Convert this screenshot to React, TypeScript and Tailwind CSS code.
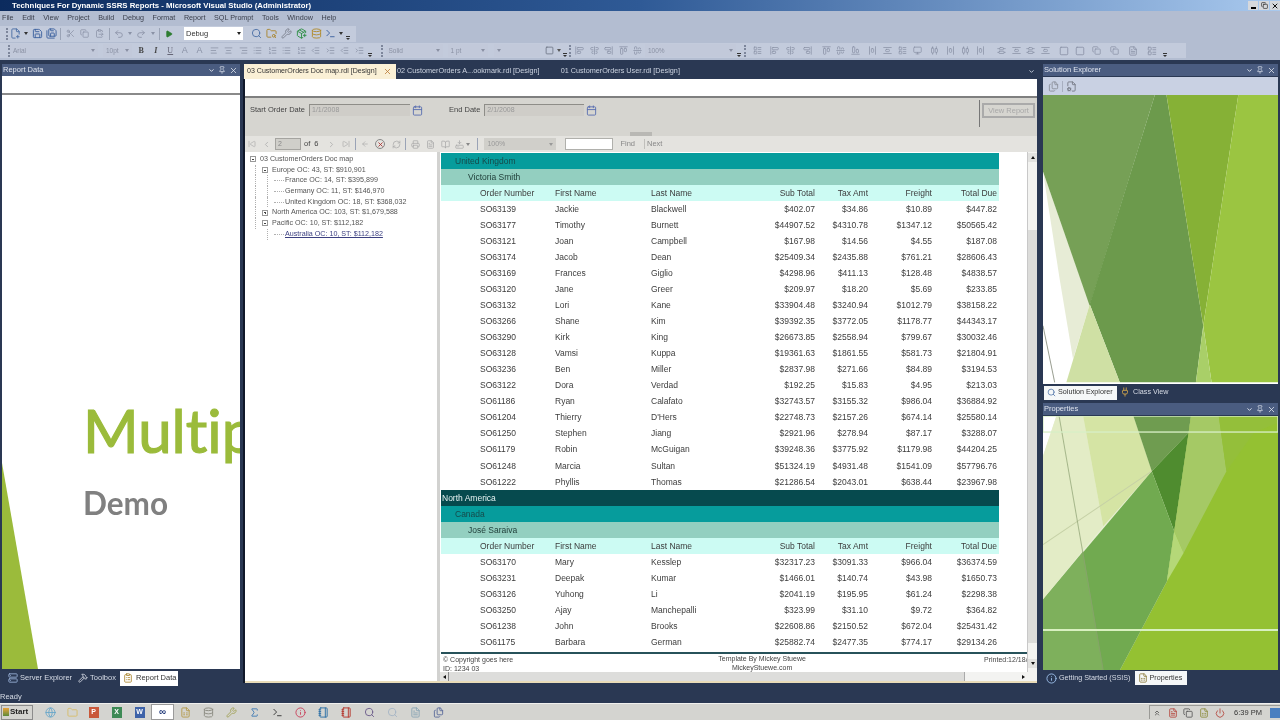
import React from 'react';
import {
  FilePlus2, Save, SaveAll, Scissors, Copy, ClipboardPaste, Undo2, Redo2, Play, Search, FolderSearch, Wrench, PackagePlus, Database, Terminal,
  ChevronDown, AlignLeft, AlignCenter, AlignRight, List, ListOrdered, Indent, Outdent, Square, Pin, X, Calendar, SkipBack, ChevronLeft, ChevronRight, SkipForward,
  ArrowLeft, RefreshCw, Printer, FileText, BookOpen, HardDriveDownload, AlignStartVertical, AlignCenterVertical, AlignEndVertical,
  AlignStartHorizontal, AlignCenterHorizontal, AlignEndHorizontal, AlignHorizontalSpaceAround, AlignVerticalSpaceAround, AlignHorizontalDistributeCenter, AlignVerticalDistributeCenter,
  Server, Hammer, Info, Files, FileCog, LayoutList, Globe, Folder, Sigma, Search as Mag, Notebook, ChevronsUp, Plug, Monitor, FileSpreadsheet, Power, ClipboardList
} from 'lucide-react';

type R = [string, string, string, string, string, string, string];
const group1: R[] = [
  ['SO63139','Jackie','Blackwell','$402.07','$34.86','$10.89','$447.82'],
  ['SO63177','Timothy','Burnett','$44907.52','$4310.78','$1347.12','$50565.42'],
  ['SO63121','Joan','Campbell','$167.98','$14.56','$4.55','$187.08'],
  ['SO63174','Jacob','Dean','$25409.34','$2435.88','$761.21','$28606.43'],
  ['SO63169','Frances','Giglio','$4298.96','$411.13','$128.48','$4838.57'],
  ['SO63120','Jane','Greer','$209.97','$18.20','$5.69','$233.85'],
  ['SO63132','Lori','Kane','$33904.48','$3240.94','$1012.79','$38158.22'],
  ['SO63266','Shane','Kim','$39392.35','$3772.05','$1178.77','$44343.17'],
  ['SO63290','Kirk','King','$26673.85','$2558.94','$799.67','$30032.46'],
  ['SO63128','Vamsi','Kuppa','$19361.63','$1861.55','$581.73','$21804.91'],
  ['SO63236','Ben','Miller','$2837.98','$271.66','$84.89','$3194.53'],
  ['SO63122','Dora','Verdad','$192.25','$15.83','$4.95','$213.03'],
  ['SO61186','Ryan','Calafato','$32743.57','$3155.32','$986.04','$36884.92'],
  ['SO61204','Thierry',"D'Hers",'$22748.73','$2157.26','$674.14','$25580.14'],
  ['SO61250','Stephen','Jiang','$2921.96','$278.94','$87.17','$3288.07'],
  ['SO61179','Robin','McGuigan','$39248.36','$3775.92','$1179.98','$44204.25'],
  ['SO61248','Marcia','Sultan','$51324.19','$4931.48','$1541.09','$57796.76'],
  ['SO61222','Phyllis','Thomas','$21286.54','$2043.01','$638.44','$23967.98'],
];
const group2: R[] = [
  ['SO63170','Mary','Kesslep','$32317.23','$3091.33','$966.04','$36374.59'],
  ['SO63231','Deepak','Kumar','$1466.01','$140.74','$43.98','$1650.73'],
  ['SO63126','Yuhong','Li','$2041.19','$195.95','$61.24','$2298.38'],
  ['SO63250','Ajay','Manchepalli','$323.99','$31.10','$9.72','$364.82'],
  ['SO61238','John','Brooks','$22608.86','$2150.52','$672.04','$25431.42'],
  ['SO61175','Barbara','German','$25882.74','$2477.35','$774.17','$29134.26'],
];
const head: R = ['Order Number','First Name','Last Name','Sub Total','Tax Amt','Freight','Total Due'];

function Row({ r, header }: { r: R; header?: boolean }) {
  return (
    <div className={`grid grid-cols-[114px_96px_89px_75px_53px_64px_67px] h-[16.05px] items-center text-[8.5px] text-[#3c3c3c] ${header ? 'bg-[#ccfbf3]' : ''}`}>
      <span className="pl-[39px]">{r[0]}</span>
      <span>{r[1]}</span>
      <span>{r[2]}</span>
      <span className="text-right">{r[3]}</span>
      <span className="text-right">{r[4]}</span>
      <span className="text-right">{r[5]}</span>
      <span className="text-right pr-[2px]">{r[6]}</span>
    </div>
  );
}
function Band({ c, children }: { c: string; children: React.ReactNode }) {
  return <div className={`h-[16.05px] flex items-center text-[8.5px] ${c}`}>{children}</div>;
}

function Cell({ w, children }: { w: string; children?: React.ReactNode }) {
  return <span className={`${w} shrink-0 flex items-center justify-center`}>{children}</span>;
}
function Grip() {
  return <span className="w-[2px] h-[12px] shrink-0 border-l-2 border-dotted border-[#7d869b]" />;
}
function Sep() {
  return <span className="w-px h-[12px] shrink-0 bg-[#9aa3b6]" />;
}
function More() {
  return (
    <span className="flex flex-col items-center justify-end w-[6px] h-[12px] shrink-0">
      <span className="w-[4px] h-px bg-[#333]" />
      <span className="w-0 h-0 mt-px border-l-[2px] border-r-[2px] border-t-[2px] border-l-transparent border-r-transparent border-t-[#333]" />
    </span>
  );
}
function Drop({ c = '#555' }: { c?: string }) {
  return <span className={`w-0 h-0 shrink-0 border-l-[2px] border-r-[2px] border-t-[3px] border-l-transparent border-r-transparent`} style={{ borderTopColor: c }} />;
}
function Combo({ w, text }: { w: string; text: string }) {
  return (
    <span className={`${w} h-[13px] shrink-0 bg-[#c2c9da] flex items-center justify-between px-[3px] text-[6.5px] text-[#8a91a3]`}>
      {text}
      <Drop c="#8a91a3" />
    </span>
  );
}
const dis = '#8a92a6';

function PanelHeader({ title }: { title: string }) {
  return (
    <div className="h-[12px] bg-[#4a5c80] flex items-center justify-between pl-[1px] pr-[2px] text-[7.5px] text-[#dfe4ee] shrink-0">
      <span>{title}</span>
      <span className="flex items-center gap-[3px]">
        <ChevronDown size={7} strokeWidth={3} color="#e6eaf2" />
        <Pin size={8} strokeWidth={2} color="#e6eaf2" />
        <X size={9} strokeWidth={2} color="#e6eaf2" />
      </span>
    </div>
  );
}

function SolutionArt() {
  return (
    <svg viewBox="10 105 704 870" preserveAspectRatio="none" className="w-full h-full block bg-white">
      <polygon points="10,335 150,735 100,900 60,660" fill="#e7ecd6" />
      <polygon points="10,105 345,105 150,740 10,335" fill="#76a056" />
      <polygon points="345,105 380,105 490,800 468,970 240,970 150,735" fill="#6c9a4c" />
      <polygon points="380,105 595,105 490,800" fill="#86b136" />
      <polygon points="595,105 714,105 714,970 515,970 490,800" fill="#9bc541" />
      <polygon points="150,735 240,970 80,970" fill="#cfe0a4" />
      <polygon points="490,800 515,970 468,970" fill="#a9cf68" />
      <line x1="10" y1="800" x2="45" y2="970" stroke="#9a9f92" strokeWidth="3" />
    </svg>
  );
}
function PropertiesArt() {
  return (
    <svg viewBox="10 50 702 760" preserveAspectRatio="none" className="w-full h-full block bg-[#e8efd4]">
      <polygon points="10,50 50,50 10,170" fill="#ffffff" />
      <polygon points="10,170 50,50 130,50 190,380 130,450 10,600" fill="#e3ecc6" />
      <polygon points="130,50 280,50 335,215 190,380" fill="#d5e4a4" />
      <polygon points="452,50 712,50 712,810 240,810 380,545" fill="#94c132" />
      <polygon points="280,50 452,50 445,100 335,215" fill="#6f9c50" />
      <polygon points="445,100 335,215 402,395" fill="#4f8c2f" />
      <polygon points="335,215 402,395 380,545 240,810 10,810 10,600" fill="#71aa50" />
      <polygon points="10,600 130,455 190,810 10,810" fill="#7eb05c" />
      <polygon points="452,50 535,50 558,215 430,460 402,395 445,100" fill="#a5c965" />
      <polygon points="402,395 430,460 380,545" fill="#b5d878" />
      <polygon points="535,50 712,50 712,70 640,100 558,215" fill="#94bf3a" />
      <line x1="10" y1="435" x2="335" y2="215" stroke="#c6d1a6" strokeWidth="3" />
      <line x1="58" y1="50" x2="190" y2="810" stroke="#8aa070" strokeWidth="3" strokeOpacity="0.7" />
      <rect x="10" y="50" width="702" height="48" fill="none" stroke="#d8efc6" strokeWidth="4" />
      <line x1="10" y1="690" x2="712" y2="690" stroke="#d8f0c0" strokeWidth="6" />
    </svg>
  );
}

function Box({ minus }: { minus?: boolean }) {
  return (
    <span className="relative w-[6px] h-[6px] shrink-0 border border-[#999] bg-white">
      <span className="absolute left-[1px] top-[1.5px] w-[2px] h-px bg-[#444]" />
      {!minus && <span className="absolute left-[1.5px] top-[1px] w-px h-[2px] bg-[#444]" />}
    </span>
  );
}
function Guide() {
  return <span className="w-[12px] h-full shrink-0 ml-[5px] -mr-[5px] border-l border-dotted border-[#b0b0b0]" />;
}
function Tick() {
  return <span className="w-[10px] shrink-0 mr-[1px] border-t border-dotted border-[#b0b0b0]" />;
}
const treeRow = 'h-[10.7px] flex items-center whitespace-nowrap text-[7.15px] text-[#555]';

function Tree() {
  return (
    <div className="w-[192px] shrink-0 pl-[5px] pt-[2px] bg-white">
      <div className={treeRow}><Box minus /><span className="ml-[4px]">03 CustomerOrders Doc map</span></div>
      <div className={treeRow}><Guide /><Box minus /><span className="ml-[4px]">Europe OC: 43, ST: $910,901</span></div>
      <div className={treeRow}><Guide /><Guide /><Tick /><span>France OC: 14, ST: $395,899</span></div>
      <div className={treeRow}><Guide /><Guide /><Tick /><span>Germany OC: 11, ST: $146,970</span></div>
      <div className={treeRow}><Guide /><Guide /><Tick /><span>United Kingdom OC: 18, ST: $368,032</span></div>
      <div className={treeRow}><Guide /><Box /><span className="ml-[4px]">North America OC: 103, ST: $1,679,588</span></div>
      <div className={treeRow}><Guide /><Box minus /><span className="ml-[4px]">Pacific OC: 10, ST: $112,182</span></div>
      <div className={treeRow}><span className="w-[12px] shrink-0" /><Guide /><Tick /><span className="underline text-[#3b3f80]">Australia OC: 10, ST: $112,182</span></div>
    </div>
  );
}

function TaskIcon({ children, active, w = 'w-[23px]' }: { children: React.ReactNode; active?: boolean; w?: string }) {
  return <span className={`${w} h-[16px] shrink-0 flex items-center justify-center ${active ? 'bg-white border border-[#9a9a9a]' : ''}`}>{children}</span>;
}
function Letter({ c, t }: { c: string; t: string }) {
  return <span className={`w-[10px] h-[11px] flex items-center justify-center text-[7px] font-bold text-white ${c}`}>{t}</span>;
}

export default function App() {
  return (
    <div className="w-[1280px] h-[720px] overflow-hidden flex flex-col bg-[#2a3853] font-['Liberation_Sans',Arial,sans-serif] blur-[0.4px]">
      {/* title */}
      <div className="h-[11px] shrink-0 flex items-center justify-between bg-gradient-to-r from-[#0c2b5e] via-[#2f5a96] to-[#a9c9ee] pl-[12px]">
        <span className="text-[7.8px] font-bold text-white whitespace-nowrap">Techniques For Dynamic SSRS Reports - Microsoft Visual Studio (Administrator)</span>
        <span className="flex gap-px">
          <span className="w-[10px] h-[9px] bg-[#d6d8dc] flex items-end justify-center pb-px"><span className="w-[5px] h-[2px] bg-black" /></span>
          <span className="w-[10px] h-[9px] bg-[#d6d8dc] flex items-center justify-center"><Copy size={7} strokeWidth={2} color="#111" /></span>
          <span className="w-[10px] h-[9px] bg-[#d6d8dc] flex items-center justify-center"><X size={8} strokeWidth={3} color="#111" /></span>
        </span>
      </div>
      {/* menu */}
      <div className="h-[14px] shrink-0 bg-[#b3bdd1] flex items-center gap-[8.6px] pl-[2px] pt-px text-[7.2px] text-[#3a3f4c] whitespace-nowrap">
        {['File','Edit','View','Project','Build','Debug','Format','Report','SQL Prompt','Tools','Window','Help'].map((m) => <span key={m}>{m}</span>)}
      </div>
      {/* toolbar 1 */}
      <div className="h-[17px] shrink-0 bg-[#b3bdd1] flex items-center">
        <div className="w-[356px] h-[16px] bg-[#c3cbdc] flex items-center pl-[6px]">
          <Grip />
          <Cell w="w-[14px]"><FilePlus2 size={11} color="#4a6fa5" /></Cell>
          <Cell w="w-[8px]"><Drop c="#333" /></Cell>
          <Cell w="w-[14px]"><Save size={11} color="#3a5f9e" /></Cell>
          <Cell w="w-[14px]"><SaveAll size={11} color="#3a5f9e" /></Cell>
          <Cell w="w-[5px]"><Sep /></Cell>
          <Cell w="w-[14px]"><Scissors size={9} color={dis} /></Cell>
          <Cell w="w-[15px]"><Copy size={9} color={dis} /></Cell>
          <Cell w="w-[15px]"><ClipboardPaste size={9} color={dis} /></Cell>
          <Cell w="w-[5px]"><Sep /></Cell>
          <Cell w="w-[14px]"><Undo2 size={10} color={dis} /></Cell>
          <Cell w="w-[8px]"><Drop c={dis} /></Cell>
          <Cell w="w-[14px]"><Redo2 size={10} color={dis} /></Cell>
          <Cell w="w-[9px]"><Drop c={dis} /></Cell>
          <Cell w="w-[4px]"><Sep /></Cell>
          <Cell w="w-[15px]"><Play size={8} color="#2e7d32" fill="#2e7d32" /></Cell>
          <span className="w-[59px] h-[13px] ml-[8px] shrink-0 bg-white flex items-center justify-between px-[2px] text-[7.5px] text-[#333]">Debug<Drop c="#222" /></span>
          <Cell w="w-[6px]" />
          <Cell w="w-[15px]"><Search size={11} color="#4a6fa5" /></Cell>
          <Cell w="w-[15px]"><FolderSearch size={11} color="#a8842c" /></Cell>
          <Cell w="w-[15px]"><Wrench size={11} color="#7a7f8c" /></Cell>
          <Cell w="w-[15px]"><PackagePlus size={11} color="#2f8f46" /></Cell>
          <Cell w="w-[14px]"><Database size={11} color="#b08a2c" /></Cell>
          <Cell w="w-[15px]"><Terminal size={11} color="#3a5f9e" /></Cell>
          <Cell w="w-[6px]"><Drop c="#333" /></Cell>
          <Cell w="w-[8px]"><More /></Cell>
        </div>
      </div>
      {/* toolbar 2 */}
      <div className="h-[18px] shrink-0 bg-[#b3bdd1] flex items-start pt-px">
        <div className="w-[1186px] h-[15px] bg-[#c3cbdc] flex items-center pl-[8px]">
          <Grip />
          <Combo w="w-[88px]" text="Arial" />
          <Cell w="w-[5px]" />
          <Combo w="w-[29px]" text="10pt" />
          <Cell w="w-[2px]" />
          <Cell w="w-[14.5px]"><span className="text-[8px] font-bold text-[#444] font-['Liberation_Serif',serif]">B</span></Cell>
          <Cell w="w-[14.5px]"><span className="text-[8px] italic font-bold text-[#444] font-['Liberation_Serif',serif]">I</span></Cell>
          <Cell w="w-[14.5px]"><span className="text-[8px] underline text-[#667] font-['Liberation_Serif',serif]">U</span></Cell>
          <Cell w="w-[14.5px]"><span className="text-[9px] text-[#8a92a6]">A</span></Cell>
          <Cell w="w-[15px]"><span className="text-[9px] text-[#8a92a6]">A</span></Cell>
          {[AlignLeft, AlignCenter, AlignRight, List, ListOrdered, List, ListOrdered, Outdent, Indent, Outdent, Indent].map((Ic, i) => (
            <Cell key={i} w="w-[14.5px]"><Ic size={9} color={dis} /></Cell>
          ))}
          <Cell w="w-[6px]"><More /></Cell>
          <Cell w="w-[8px]" />
          <Grip />
          <Cell w="w-[3px]" />
          <Combo w="w-[57px]" text="Solid" />
          <Cell w="w-[5px]" />
          <Combo w="w-[40px]" text="1 pt" />
          <Cell w="w-[6px]" />
          <Combo w="w-[46px]" text="" />
          <Cell w="w-[4px]" />
          <Cell w="w-[12px]"><Square size={9} color="#666d7d" /></Cell>
          <Cell w="w-[6px]"><Drop c="#555" /></Cell>
          <Cell w="w-[6px]"><More /></Cell>
          <Cell w="w-[5px]"><Grip /></Cell>
          {[AlignStartVertical, AlignCenterVertical, AlignEndVertical, AlignStartHorizontal, AlignCenterHorizontal].map((Ic, i) => (
            <Cell key={i} w="w-[14.5px]"><Ic size={9} color={dis} /></Cell>
          ))}
          <Combo w="w-[91px]" text="100%" />
          <Cell w="w-[6px]"><More /></Cell>
          <Cell w="w-[2px]" />
          <Grip />
          <Cell w="w-[3px]" />
          {[LayoutList, AlignStartVertical, AlignCenterVertical, AlignEndVertical].map((Ic, i) => (
            <Cell key={i} w="w-[16.7px]"><Ic size={9} color={dis} /></Cell>
          ))}
          <Cell w="w-[3px]" />
          {[AlignStartHorizontal, AlignCenterHorizontal, AlignEndHorizontal].map((Ic, i) => (
            <Cell key={i} w="w-[14.5px]"><Ic size={9} color={dis} /></Cell>
          ))}
          <Cell w="w-[3px]" />
          {[AlignHorizontalSpaceAround, AlignVerticalSpaceAround, LayoutList, Monitor].map((Ic, i) => (
            <Cell key={i} w="w-[15px]"><Ic size={9} color={dis} /></Cell>
          ))}
          <Cell w="w-[2px]" />
          {[AlignHorizontalDistributeCenter, AlignHorizontalSpaceAround, AlignHorizontalDistributeCenter, AlignHorizontalSpaceAround].map((Ic, i) => (
            <Cell key={i} w="w-[15.3px]"><Ic size={9} color={dis} /></Cell>
          ))}
          <Cell w="w-[6px]" />
          {[AlignVerticalDistributeCenter, AlignVerticalSpaceAround, AlignVerticalDistributeCenter, AlignVerticalSpaceAround].map((Ic, i) => (
            <Cell key={i} w="w-[14.6px]"><Ic size={9} color={dis} /></Cell>
          ))}
          <Cell w="w-[3px]" />
          {[Square, Square].map((Ic, i) => (
            <Cell key={i} w="w-[16px]"><Ic size={10} color={dis} /></Cell>
          ))}
          {[Copy, Copy].map((Ic, i) => (
            <Cell key={i} w="w-[18px]"><Ic size={9} color={dis} /></Cell>
          ))}
          {[FileText, LayoutList].map((Ic, i) => (
            <Cell key={i} w="w-[19px]"><Ic size={10} color={dis} /></Cell>
          ))}
          <Cell w="w-[6px]"><More /></Cell>
        </div>
      </div>

      {/* body */}
      <div className="h-[630px] shrink-0 flex pt-[4px] pl-[2px]">
        {/* left */}
        <div className="w-[238px] shrink-0 flex flex-col">
          <PanelHeader title="Report Data" />
          <div className="h-[593px] shrink-0 bg-white flex flex-col relative overflow-hidden">
            <div className="h-[17px] shrink-0 border-b-2 border-[#8a8a8a] box-content" />
            <svg viewBox="0 0 36 206" className="absolute left-0 bottom-0 w-[36px] h-[206px]">
              <polygon points="0,0 36,206 0,206" fill="#9bbb3b" />
            </svg>
            <div className="pl-[81px] pt-[300px] whitespace-nowrap font-['Lato',sans-serif] [font-variant-ligatures:none]">
              <div className="text-[60px] leading-[70px] text-[#9bbb3b] [-webkit-text-stroke:1.2px_#9bbb3b]">Multip</div>
              <div className="mt-[20px] text-[31.5px] leading-[36px] font-bold text-[#808080]">Demo</div>
            </div>
          </div>
          <div className="h-[16px] mt-[1px] flex items-center text-[7.5px] text-[#d7dce6] whitespace-nowrap">
            <span className="pl-[6px]"><Server size={10} color="#9db7de" /></span>
            <span className="ml-[2px]">Server Explorer</span>
            <span className="ml-[6px]"><Hammer size={10} color="#d7dce6" /></span>
            <span className="ml-[2px]">Toolbox</span>
            <span className="ml-[4px] h-[15px] w-[58px] bg-white text-[#333] flex items-center pl-[3px] gap-[3px]"><ClipboardList size={10} color="#a8842c" />Report Data</span>
          </div>
        </div>

        {/* center */}
        <div className="w-[794px] ml-[3px] h-[619px] shrink-0 flex flex-col">
          <div className="h-[15px] shrink-0 flex items-center text-[7.25px] text-[#ccd3e0] whitespace-nowrap relative">
            <span className="w-[152px] h-full bg-[#faf0d6] text-[#333] text-[7.05px] flex items-center justify-between pl-[3px] pr-[4px] ml-px">
              03 CustomerOrders Doc map.rdl [Design]
              <X size={9} strokeWidth={2} color="#b5732c" />
            </span>
            <span className="ml-[1px]">02 CustomerOrders A...ookmark.rdl [Design]</span>
            <span className="ml-[21px]">01 CustomerOrders User.rdl [Design]</span>
            <span className="ml-auto mr-[2px]"><ChevronDown size={7} strokeWidth={3} color="#ccd3e0" /></span>
          </div>
          <div className="flex-1 flex flex-col bg-white border-l-2 border-[#10182a] min-h-0 relative">
            <div className="h-[17px] shrink-0" />
            <div className="h-[2px] shrink-0 bg-[#7f7f7f]" />
            {/* params */}
            <div className="h-[38px] shrink-0 bg-[#d6d5d0] flex items-start relative text-[7.5px] text-[#444] whitespace-nowrap">
              <div className="flex items-center pt-[6px] pl-[5px]">
                <span>Start Order Date</span>
                <span className="ml-[4px] w-[101px] h-[12px] bg-[#cfcdc8] border-t border-l border-[#8e8d88] text-[#999] pl-[2px] text-[7px] flex items-center">1/1/2008</span>
                <span className="ml-[2px]"><Calendar size={11} color="#5a6fb0" /></span>
                <span className="ml-[26px]">End Date</span>
                <span className="ml-[4px] w-[100px] h-[12px] bg-[#cfcdc8] border-t border-l border-[#8e8d88] text-[#999] pl-[2px] text-[7px] flex items-center">2/1/2008</span>
                <span className="ml-[2px]"><Calendar size={11} color="#5a6fb0" /></span>
              </div>
              <div className="ml-auto flex items-start">
                <span className="w-px h-[27px] mt-[2px] bg-[#777]" />
                <span className="ml-[2px] mt-[5px] mr-[2px] w-[53px] h-[15px] border-2 border-[#aaa] text-[#a8a8a8] flex items-center justify-center">View Report</span>
              </div>
              <span className="absolute left-[385px] bottom-0 w-[22px] h-[4px] bg-[#b9b8b4]" />
            </div>
            {/* report toolbar */}
            <div className="h-[16px] shrink-0 bg-[#e4e3df] flex items-center text-[7.5px] text-[#888] whitespace-nowrap">
              <Cell w="w-[14px]"><SkipBack size={8} color="#aaa" /></Cell>
              <Cell w="w-[14px]"><ChevronLeft size={9} color="#aaa" /></Cell>
              <span className="w-[26px] h-[12px] ml-[2px] bg-[#d0cfca] border border-[#a5a4a0] pl-[2px] flex items-center text-[7px]">2</span>
              <span className="ml-[3px] text-[#444]">of</span>
              <span className="ml-[4px] text-[#444]">6</span>
              <span className="w-[3px] shrink-0" />
              <Cell w="w-[20px]"><ChevronRight size={9} color="#aaa" /></Cell>
              <Cell w="w-[10px]"><SkipForward size={8} color="#aaa" /></Cell>
              <Cell w="w-[8px]"><Sep /></Cell>
              <Cell w="w-[12px]"><ArrowLeft size={8} color="#aaa" /></Cell>
              <Cell w="w-[18px]"><span className="w-[10px] h-[10px] rounded-full border border-[#888] flex items-center justify-center"><X size={7} strokeWidth={3} color="#a33" /></span></Cell>
              <Cell w="w-[14px]"><RefreshCw size={9} color="#aaa" /></Cell>
              <Cell w="w-[5px]"><Sep /></Cell>
              <Cell w="w-[15px]"><Printer size={9} color="#aaa" /></Cell>
              <Cell w="w-[15px]"><FileText size={9} color="#aaa" /></Cell>
              <Cell w="w-[15px]"><BookOpen size={9} color="#aaa" /></Cell>
              <Cell w="w-[12px]"><HardDriveDownload size={9} color="#aaa" /></Cell>
              <Cell w="w-[6px]"><Drop c="#888" /></Cell>
              <Cell w="w-[13px]"><Sep /></Cell>
              <span className="w-[72px] h-[12px] bg-[#d0cfca] flex items-center justify-between px-[3px] text-[7px] text-[#999]">100%<Drop c="#999" /></span>
              <span className="w-[48px] h-[12px] ml-[9px] bg-white border border-[#b0b0ac]" />
              <span className="ml-[7px]">Find</span>
              <span className="w-px h-[10px] ml-[9px] bg-[#c0bfbb]" />
              <span className="ml-[2px]">Next</span>
            </div>
            {/* report */}
            <div className="flex-1 flex min-h-0">
              <Tree />
              <div className="w-[3px] shrink-0 bg-[#d2d2d0]" />
              <div className="flex-1 flex flex-col min-w-0">
                <div className="flex-1 flex min-h-0">
                  <div className="flex-1 min-w-0 flex flex-col overflow-hidden pl-px">
                    <div className="w-[558px] pt-px">
                      <Band c="bg-[#069c9c] pl-[14px] text-[#164a4a]">United Kingdom</Band>
                      <Band c="bg-[#93cfc0] pl-[27px] text-[#1d3b36]">Victoria Smith</Band>
                      <Row r={head} header />
                      {group1.map((r) => <Row key={r[0]} r={r} />)}
                      <Band c="bg-[#064a4e] pl-[1px] text-[#e6f2f2]">North America</Band>
                      <Band c="bg-[#069c9c] pl-[14px] text-[#164a4a]">Canada</Band>
                      <Band c="bg-[#93cfc0] pl-[27px] text-[#1d3b36]">José Saraiva</Band>
                      <Row r={head} header />
                      {group2.map((r) => <Row key={r[0]} r={r} />)}
                    </div>
                    <div className="h-[2px] mt-[1.5px] shrink-0 bg-[#27525a]" />
                    <div className="flex-1 min-h-0 overflow-hidden flex justify-between text-[7px] text-[#444] whitespace-nowrap">
                      <div className="pl-[2px] pt-[1px] leading-[9px]">
                        <div>© Copyright goes here</div>
                        <div>ID: 1234 03</div>
                      </div>
                      <div className="ml-[27px] leading-[9px] text-center">
                        <div>Template By Mickey Stuewe</div>
                        <div>MickeyStuewe.com</div>
                      </div>
                      <div className="pt-[1px] w-[43px] overflow-hidden leading-[9px]">Printed:12/18/</div>
                    </div>
                  </div>
                  <div className="w-[10px] shrink-0 bg-[#f3f3f1] flex flex-col items-center border-l border-[#c8c8c8]">
                    <span className="h-[9px] mt-[1px] w-full bg-[#e2e2e0] flex items-center justify-center"><span className="w-0 h-0 border-l-[2.5px] border-r-[2.5px] border-b-[3px] border-l-transparent border-r-transparent border-b-[#111]" /></span>
                    <span className="mt-[68px] w-full h-[413px] bg-[#dcdcda]" />
                    <span className="flex-1" />
                    <span className="h-[9px] mb-[4px] w-full bg-[#e2e2e0] flex items-center justify-center"><span className="w-0 h-0 border-l-[2.5px] border-r-[2.5px] border-t-[3px] border-l-transparent border-r-transparent border-t-[#111]" /></span>
                  </div>
                </div>
                <div className="h-[9px] shrink-0 flex bg-[#e4e4e2]">
                  <span className="w-[9px] flex items-center justify-center border-r border-[#888]"><span className="w-0 h-0 border-t-[2.5px] border-b-[2.5px] border-r-[3px] border-t-transparent border-b-transparent border-r-[#111]" /></span>
                  <span className="w-[516px] bg-[#dddddb] border-r border-[#aaa]" />
                  <span className="flex-1 bg-[#f3f3f1] flex items-center justify-end pr-[12px]"><span className="w-0 h-0 border-t-[2.5px] border-b-[2.5px] border-l-[3px] border-t-transparent border-b-transparent border-l-[#111]" /></span>
                </div>
              </div>
            </div>
            <div className="h-[2px] shrink-0 bg-[#e9dcb9]" />
          </div>
        </div>

        {/* right */}
        <div className="w-[235px] ml-[6px] shrink-0 flex flex-col">
          <PanelHeader title="Solution Explorer" />
          <div className="h-[18px] mt-px shrink-0 bg-[#c9d1e3] flex items-center pl-[5px] gap-[3px]">
            <Files size={11} color="#8b8f9a" />
            <span className="w-px h-[11px] bg-[#a8afc0]" />
            <FileCog size={11} color="#777c88" />
          </div>
          <div className="h-[289px] shrink-0"><SolutionArt /></div>
          <div className="h-[16px] shrink-0 flex items-center text-[7.2px] text-[#d7dce6] whitespace-nowrap">
            <span className="ml-[1px] w-[73px] h-[14px] mt-px bg-[#f5f7f8] text-[#333] flex items-center pl-[3px] gap-[2px]"><Mag size={9} color="#4a6fa5" />Solution Explorer</span>
            <span className="ml-[3px]"><Plug size={10} color="#d9a94a" /></span>
            <span className="ml-[3px]">Class View</span>
          </div>
          <div className="h-[3px] shrink-0" />
          <PanelHeader title="Properties" />
          <div className="h-[254px] mt-px shrink-0"><PropertiesArt /></div>
          <div className="h-[16px] shrink-0 flex items-center text-[7.2px] text-[#d7dce6] whitespace-nowrap">
            <span className="ml-[3px]"><Info size={11} color="#9cc0ea" /></span>
            <span className="ml-[2px]">Getting Started (SSIS)</span>
            <span className="ml-[4px] w-[52px] h-[14px] bg-[#f5f7f8] text-[#333] flex items-center pl-[3px] gap-[2px]"><FileSpreadsheet size={10} color="#8a7a3a" />Properties</span>
          </div>
        </div>
      </div>

      {/* status */}
      <div className="h-[13px] shrink-0 flex items-center text-[7.5px] text-[#d7dce6]">Ready</div>
      {/* taskbar */}
      <div className="flex-1 bg-[#d4d4d0] border-t border-[#f0f0ee] flex items-center whitespace-nowrap">
        <span className="ml-[1px] w-[32px] h-[15px] border border-[#8c8c8c] flex items-center gap-px pl-px text-[8px] font-bold text-[#222]"><span className="w-[6px] h-[8px] bg-gradient-to-b from-[#e8a23a] to-[#5a8a3a]" />Start</span>
        <span className="w-[6px] shrink-0" />
        <TaskIcon><Globe size={11} color="#6aa7c9" /></TaskIcon>
        <TaskIcon w="w-[20px]"><Folder size={11} color="#d8bd6a" /></TaskIcon>
        <TaskIcon><Letter c="bg-[#c9583a]" t="P" /></TaskIcon>
        <TaskIcon><Letter c="bg-[#3d8a55]" t="X" /></TaskIcon>
        <TaskIcon><Letter c="bg-[#3d62a8]" t="W" /></TaskIcon>
        <TaskIcon active><span className="text-[10px] font-bold text-[#223a7a] leading-none">∞</span></TaskIcon>
        <TaskIcon><FileSpreadsheet size={11} color="#b59a4a" /></TaskIcon>
        <TaskIcon><Database size={11} color="#8a8a80" /></TaskIcon>
        <TaskIcon><Wrench size={11} color="#a3a35a" /></TaskIcon>
        <TaskIcon><Sigma size={11} color="#3d7ab5" /></TaskIcon>
        <TaskIcon><Terminal size={11} color="#333" /></TaskIcon>
        <TaskIcon><Info size={11} color="#c9405a" /></TaskIcon>
        <TaskIcon><Notebook size={11} color="#2a6fa5" /></TaskIcon>
        <TaskIcon><Notebook size={11} color="#b5332a" /></TaskIcon>
        <TaskIcon><Mag size={11} color="#6a5a8a" /></TaskIcon>
        <TaskIcon><Mag size={11} color="#a5b5c5" /></TaskIcon>
        <TaskIcon><FileText size={11} color="#8aa5b5" /></TaskIcon>
        <TaskIcon><Files size={11} color="#5a6a9a" /></TaskIcon>
        <span className="ml-auto h-[14px] border-l border-t border-[#9a9a96] flex items-center text-[7.5px] text-[#333] pl-[3px]">
          <ChevronsUp size={8} color="#333" />
          <span className="ml-[7px]"><FileText size={10} color="#b5433a" /></span>
          <span className="ml-[5px]"><Copy size={10} color="#555" /></span>
          <span className="ml-[6px]"><FileSpreadsheet size={10} color="#8a8a3a" /></span>
          <span className="ml-[6px]"><Power size={10} color="#b5433a" /></span>
          <span className="ml-[9px]">6:39 PM</span>
          <span className="ml-[8px] w-[10px] h-[10px] bg-[#4a7fc0]" />
        </span>
      </div>
    </div>
  );
}
